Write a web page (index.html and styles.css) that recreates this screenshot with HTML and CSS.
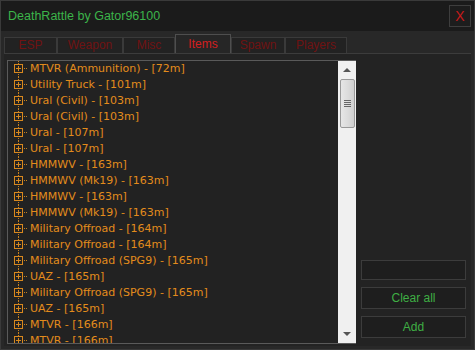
FILE: index.html
```html
<!DOCTYPE html>
<html lang="en">
<head>
    <meta charset="UTF-8">
    <title>DeathRattle by Gator96100</title>
    <link rel="stylesheet" href="styles.css">
</head>
<body>

    <svg width="0" height="0" class="defs">
        <symbol id="node" viewBox="0 0 16 16">
            <path d="M4.5 0v3M4.5 13v3" stroke="#c8801c" stroke-dasharray="1 1" />
            <rect x="0.5" y="3.5" width="8" height="8" fill="none" stroke="#d8881e" />
            <path d="M2 7.5h5M4.5 5v5" stroke="#d8881e" />
            <path d="M10 7.5h4" stroke="#c8801c" stroke-dasharray="1 1" />
        </symbol>
    </svg>

    <div class="window">
        <div class="titlebar">
            <span class="title">DeathRattle by Gator96100</span>
            <button class="close-btn">X</button>
        </div>

        <div class="main">
            <div class="tabs">
                <div class="tab">ESP</div>
                <div class="tab">Weapon</div>
                <div class="tab">Misc</div>
                <div class="tab active">Items</div>
                <div class="tab">Spawn</div>
                <div class="tab">Players</div>
            </div>

            <div class="panel">
                <div class="listbox">
                    <ul class="tree">
                        <li><svg class="node"><use href="#node"/></svg>MTVR (Ammunition) - [72m]</li>
                        <li><svg class="node"><use href="#node"/></svg>Utility Truck - [101m]</li>
                        <li><svg class="node"><use href="#node"/></svg>Ural (Civil) - [103m]</li>
                        <li><svg class="node"><use href="#node"/></svg>Ural (Civil) - [103m]</li>
                        <li><svg class="node"><use href="#node"/></svg>Ural - [107m]</li>
                        <li><svg class="node"><use href="#node"/></svg>Ural - [107m]</li>
                        <li><svg class="node"><use href="#node"/></svg>HMMWV - [163m]</li>
                        <li><svg class="node"><use href="#node"/></svg>HMMWV (Mk19) - [163m]</li>
                        <li><svg class="node"><use href="#node"/></svg>HMMWV - [163m]</li>
                        <li><svg class="node"><use href="#node"/></svg>HMMWV (Mk19) - [163m]</li>
                        <li><svg class="node"><use href="#node"/></svg>Military Offroad - [164m]</li>
                        <li><svg class="node"><use href="#node"/></svg>Military Offroad - [164m]</li>
                        <li><svg class="node"><use href="#node"/></svg>Military Offroad (SPG9) - [165m]</li>
                        <li><svg class="node"><use href="#node"/></svg>UAZ - [165m]</li>
                        <li><svg class="node"><use href="#node"/></svg>Military Offroad (SPG9) - [165m]</li>
                        <li><svg class="node"><use href="#node"/></svg>UAZ - [165m]</li>
                        <li><svg class="node"><use href="#node"/></svg>MTVR - [166m]</li>
                        <li><svg class="node"><use href="#node"/></svg>MTVR - [166m]</li>
                    </ul>
                    <div class="scrollbar">
                        <div class="arrow up"></div>
                        <div class="thumb"><span class="grip"></span></div>
                        <div class="track"></div>
                        <div class="arrow down"></div>
                    </div>
                </div>

                <div class="side">
                    <input type="text" class="textbox">
                    <button class="btn">Clear all</button>
                    <button class="btn">Add</button>
                </div>
            </div>
        </div>
    </div>

</body>
</html>
```

FILE: styles.css
```css
* {
    box-sizing: border-box;
    margin: 0;
    padding: 0;
}

body {
    font-family: 'DejaVu Sans', Tahoma, sans-serif;
    font-size: 11px;
    background: #1b1b1b;
}

.defs {
    position: absolute;
}

.window {
    width: 475px;
    height: 350px;
    background: #1b1b1b;
    border: 1px solid #3a3a3a;
    display: flex;
    flex-direction: column;
    overflow: hidden;
}

.titlebar {
    flex: none;
    height: 30px;
    display: flex;
    align-items: center;
    justify-content: space-between;
    padding: 0 3px 0 7px;
}

.title {
    color: #3cb44a;
    font-family: 'Liberation Sans', Arial, sans-serif;
    font-size: 12.5px;
}

.close-btn {
    width: 22px;
    height: 22px;
    background: #1d1d1d;
    border: 1px solid #3e3e3e;
    color: #c81a1a;
    font-family: 'Liberation Sans', Arial, sans-serif;
    font-size: 14px;
}

.main {
    flex: 1;
    min-height: 0;
    background: #282828;
    padding: 3px 3px 3px 3px;
    display: flex;
    flex-direction: column;
}

.tabs {
    flex: none;
    display: flex;
    align-items: flex-end;
    height: 19px;
    position: relative;
    z-index: 1;
}

.tab {
    height: 16px;
    background: #222;
    border: 1px solid #3a3a3a;
    border-bottom: none;
    color: #701212;
    font-family: 'Liberation Sans', Arial, sans-serif;
    font-size: 12px;
    line-height: 14px;
    text-align: center;
}

.tab:nth-child(1) { width: 53px; }
.tab:nth-child(2) { width: 66px; }
.tab:nth-child(3) { width: 52px; }
.tab:nth-child(4) { width: 56px; }
.tab:nth-child(5) { width: 54px; }
.tab:nth-child(6) { width: 62px; }

.tab.active {
    height: 19px;
    background: #262626;
    border-color: #4e4e4e;
    color: #d41f1f;
    line-height: 19px;
}

.panel {
    flex: 1;
    min-height: 0;
    background: #232323;
    border-top: 1px solid #3c3c3c;
    display: flex;
    padding: 6px 5px 2px 3px;
    gap: 5px;
}

.listbox {
    flex: none;
    width: 349px;
    border: 1px solid #5a5a5a;
    border-right: none;
    display: flex;
    background: #222;
    overflow: hidden;
}

.tree {
    flex: 1;
    list-style: none;
    overflow: hidden;
    padding-left: 6px;
}

.tree li {
    height: 16px;
    line-height: 16px;
    color: #e38c1c;
    white-space: nowrap;
    display: flex;
    align-items: center;
}

.node {
    width: 16px;
    height: 16px;
    flex: none;
}

.scrollbar {
    flex: none;
    width: 18px;
    background: #f0f0f0;
    display: flex;
    flex-direction: column;
    align-items: center;
}

.arrow {
    flex: none;
    height: 18px;
    width: 100%;
    position: relative;
}

.arrow::after {
    content: "";
    position: absolute;
    left: 5px;
    top: 7px;
    border-left: 4px solid transparent;
    border-right: 4px solid transparent;
}

.arrow.up::after {
    border-bottom: 4px solid #555;
}

.arrow.down::after {
    border-top: 4px solid #555;
}

.thumb {
    flex: none;
    width: 15px;
    height: 49px;
    border: 1px solid #999;
    border-radius: 2px;
    background: linear-gradient(to right, #e6e6e6, #dcdcdc 50%, #cfcfcf);
    display: flex;
    align-items: center;
    justify-content: center;
}

.grip {
    width: 7px;
    height: 7px;
    background: repeating-linear-gradient(to bottom, #666 0 1px, transparent 1px 2px);
}

.track {
    flex: 1;
}

.side {
    flex: 1;
    display: flex;
    flex-direction: column;
    justify-content: flex-end;
    gap: 7px;
    padding-bottom: 6px;
}

.textbox {
    height: 20px;
    width: 100%;
    background: #1e1e1e;
    border: 1px solid #3c3c3c;
    color: #3cb44a;
}

.btn {
    height: 22px;
    background: #1e1e1e;
    border: 1px solid #3c3c3c;
    color: #3fae44;
    font-family: 'Liberation Sans', Arial, sans-serif;
    font-size: 12px;
}
```
